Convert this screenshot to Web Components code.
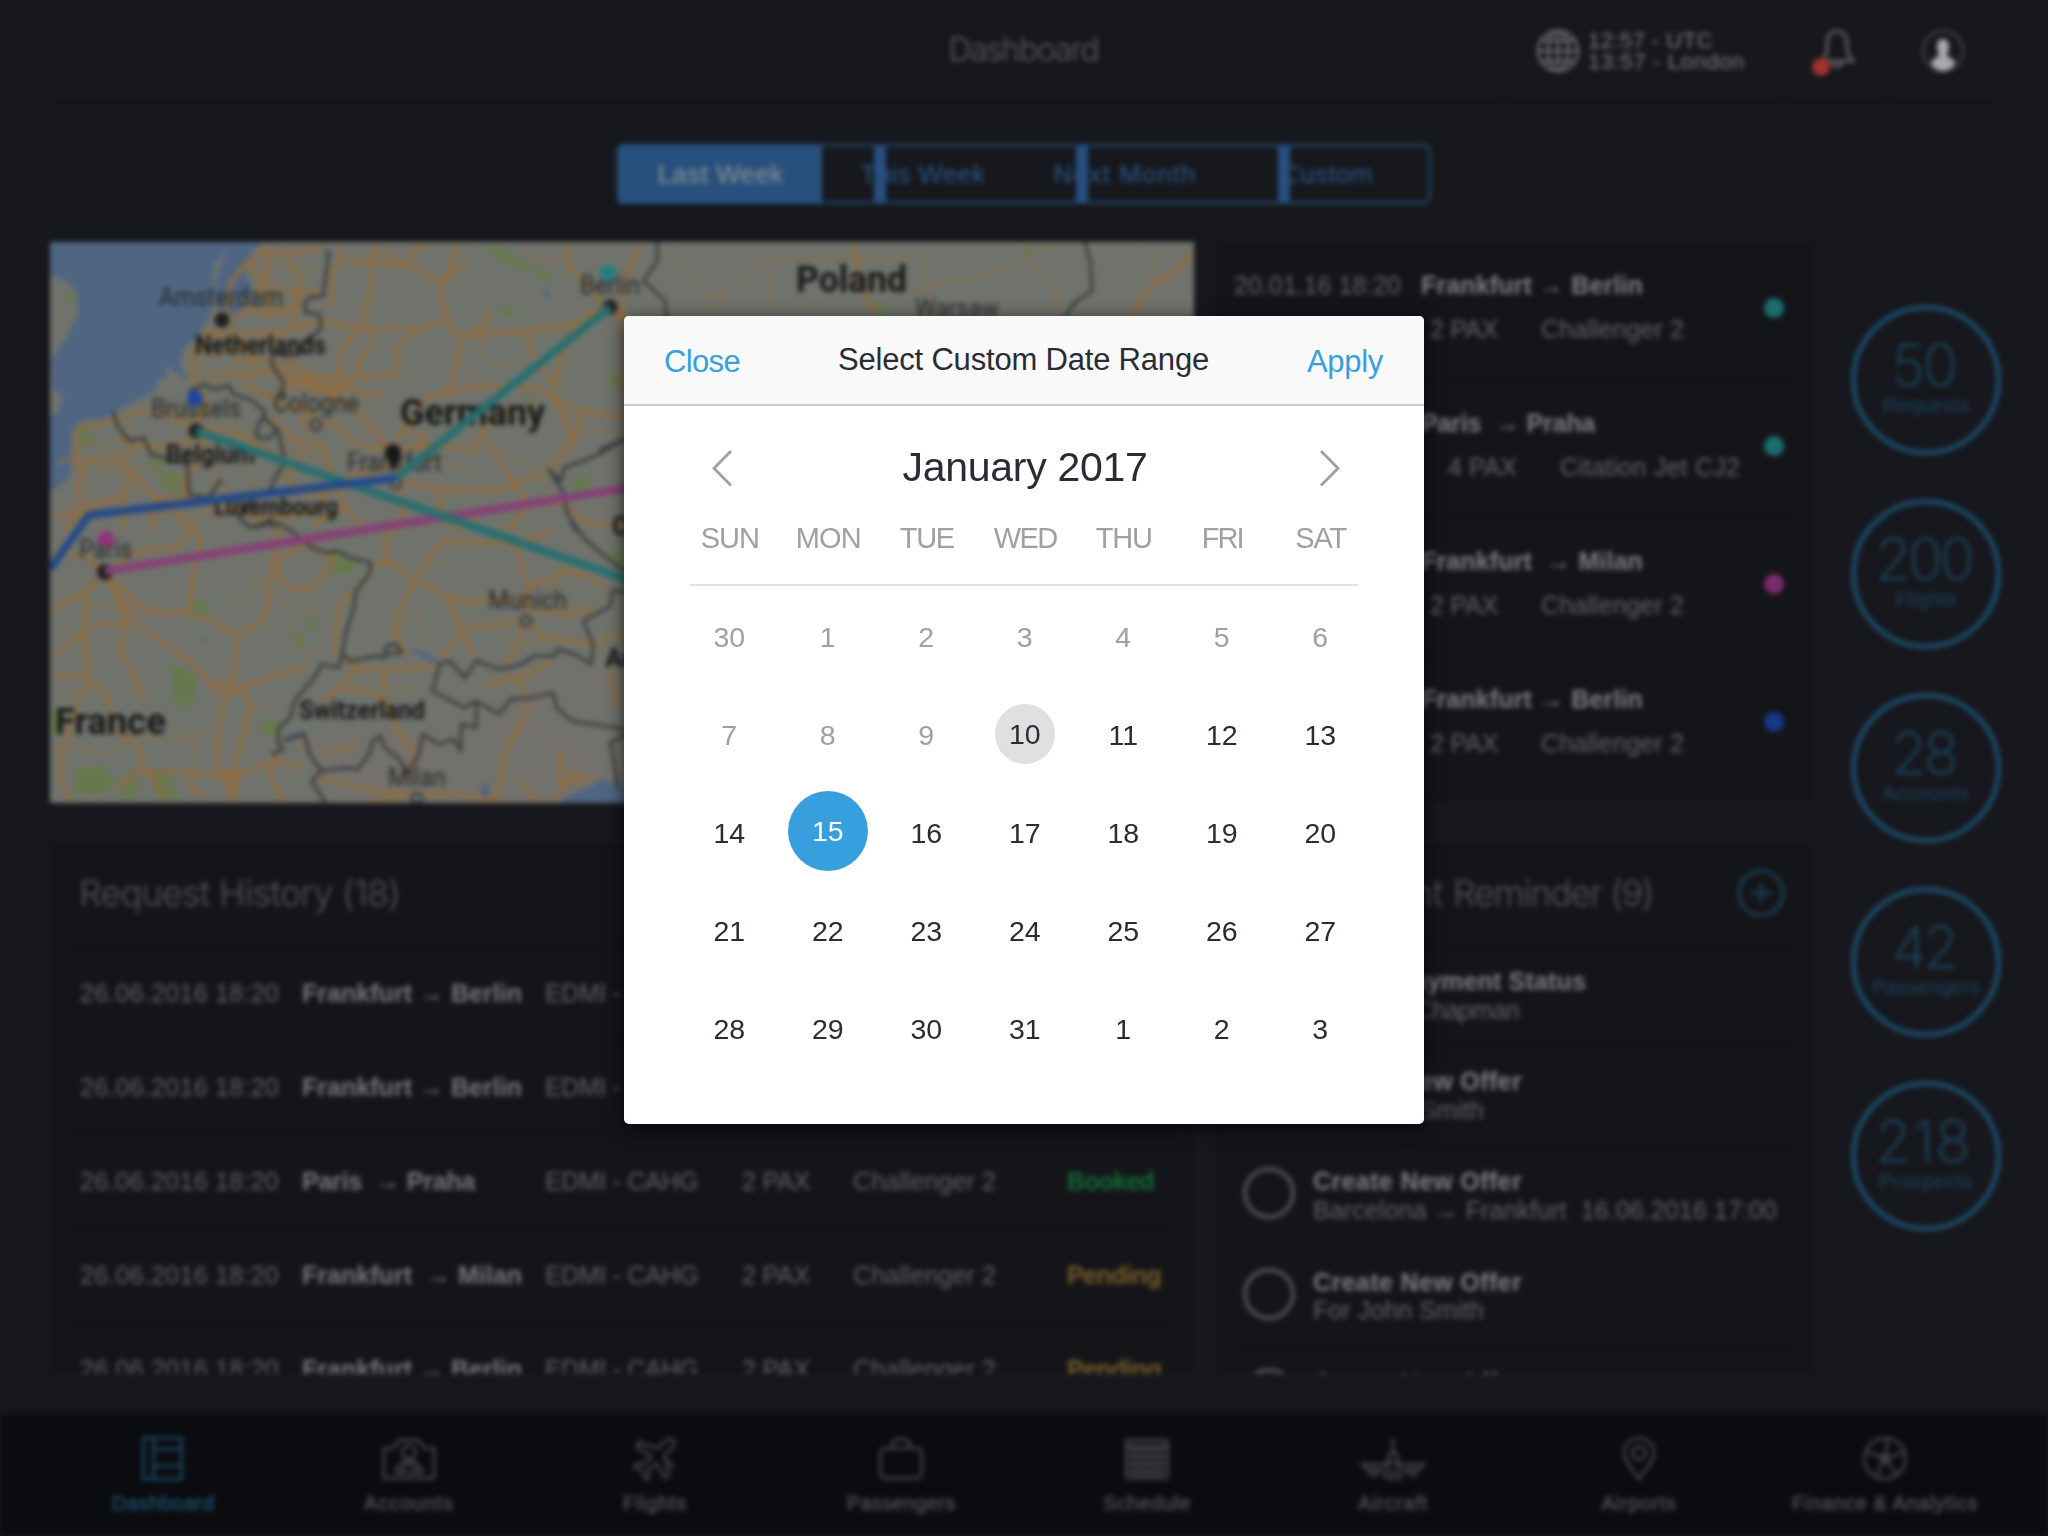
<!DOCTYPE html>
<html lang="en">
<head>
<meta charset="utf-8">
<title>Dashboard</title>
<style>
html,body{margin:0;height:100%;background:#17181d;overflow:hidden}
body{width:2048px;height:1536px;position:relative;font-family:"Liberation Sans",Arial,sans-serif}
</style>
</head>
<body>
<dash-app></dash-app>
<date-dialog></date-dialog>
<script>
function define(name, build) {
  customElements.define(name, class extends HTMLElement {
    connectedCallback() {
      if (this.shadowRoot) return;
      this.attachShadow({ mode: 'open' }).innerHTML = build(this);
    }
  });
}

/* Text run tracked out or in so it occupies the width given in "w". */
customElements.define('fit-text', class extends HTMLElement {
  connectedCallback() {
    if (this.shadowRoot) return;
    this.attachShadow({ mode: 'open' }).innerHTML =
      '<style>:host{display:inline-block;white-space:pre;line-height:1.15}span{display:inline-block}</style><span><slot></slot></span>';
    const s = this.shadowRoot.querySelector('span');
    const w = +this.getAttribute('w'), n = this.textContent.length;
    const natural = s.getBoundingClientRect().width;
    s.style.letterSpacing = ((w - natural) / n).toFixed(3) + 'px';
    this.style.width = w + 'px';
  }
});

/* ---------- header ---------- */
define('dash-header', () => `
<style>
:host{display:grid;grid-template-columns:1454px 276px 109px 106px;margin:0 50px;height:101px;border-bottom:2px solid #101115}
div{display:flex;align-items:center;border-left:2px solid #131418;box-sizing:border-box}
.title{border:0;justify-content:center;padding-left:493px;color:#5c5d5f;font:300 32px Inter,"Liberation Sans",sans-serif}
.clock{padding-left:30px;gap:8px;color:#7c7d7f;font-size:22px}
.clock p{margin:0;line-height:21px;display:flex;flex-direction:column}
.clock fit-text{line-height:21px}
.ico{justify-content:center}
svg{display:block;fill:none}
</style>
<div class="title"><fit-text w="150">Dashboard</fit-text></div>
<div class="clock">
 <svg width="44" height="44" viewBox="0 0 44 44" stroke="#707173" stroke-width="2.4"><circle cx="22" cy="22" r="20"/><ellipse cx="22" cy="22" rx="10" ry="20"/><path d="M22 2v40M2 22h40M5 12h34M5 32h34"/></svg>
 <p><fit-text w="125">12:57 - UTC</fit-text><fit-text w="157">13:57 - London</fit-text></p>
</div>
<div class="ico"><svg width="54" height="54" viewBox="0 0 54 54"><path d="M13 37c5-5 5-9 5-17 0-8 4-13 10-13s10 5 10 13c0 8 1 12 6 17zM23 38c0 6 10 6 10 0M13 37h31" stroke="#6a6b6d" stroke-width="2.6"/><circle cx="12" cy="43" r="9" fill="#a23231"/></svg></div>
<div class="ico"><svg width="46" height="46" viewBox="0 0 46 46"><circle cx="23" cy="23" r="20" stroke="#4c4d50" stroke-width="2"/><path d="M23 11c5 0 6 4 6 8 0 4-2 6-2 8 0 3 8 3 8 8-2 5-7 8-12 8s-10-3-12-8c0-5 8-5 8-8-1-2-2-4-2-8 0-4 1-8 6-8z" fill="#a8a9aa"/></svg></div>`);

/* ---------- period switch ---------- */
define('period-switch', () => `
<style>
:host{display:grid;grid-template-columns:repeat(4,1fr);width:814px;height:60px;border:3px solid #1f3f61;border-radius:7px;box-sizing:border-box;color:#285887;font-size:26px}
div{position:relative;display:flex;align-items:center;justify-content:center}
.on{background:#28507d;color:#8c9094;margin:-3px 0 -3px -3px;border-radius:6px 0 0 6px}
div:not(.on)::after{content:"";position:absolute;left:52px;top:-1px;bottom:-1px;width:12px;background:#285080}
fit-text{margin-top:1px}
.on fit-text{margin-left:2px}
</style>
<div class="on"><fit-text w="126">Last Week</fit-text></div>
<div><fit-text w="125">This Week</fit-text></div>
<div><fit-text w="143">Next Month</fit-text></div>
<div><fit-text w="92">Custom</fit-text></div>`);

/* ---------- route map ---------- */
define('route-map', () => {
  const label = (x, y, w, size, t, bold) =>
    `<text x="${x}" y="${y}" textLength="${w}" lengthAdjust="spacingAndGlyphs" font-size="${size}" ${bold ? 'font-weight="700" fill="#161718"' : 'fill="#27292b"'}>${t}</text>`;
  return `
<style>
:host{display:block;width:1144px;height:561px;overflow:hidden}
svg{display:block;font-family:Roboto,"Liberation Sans",sans-serif}
path{vector-effect:non-scaling-stroke}
.sea{fill:#4f6582}.park{fill:#66794e}.land{fill:#70736c}
.road path{fill:none;stroke:#8c6d45;stroke-width:4.4;stroke-linejoin:round}
.minor path{fill:none;stroke:#7f7054;stroke-width:2.8}
.border path{fill:none;stroke:#3a3c3c;stroke-width:3;stroke-linejoin:round}
.hills{fill:#73716b}
.route path{fill:none;stroke-width:8;stroke-linejoin:round}
</style>
<svg width="1144" height="561" viewBox="50 241 1144 561">
<rect class="land" x="50" y="241" width="1144" height="561"/>
<g transform="translate(40 520) scale(.3827 .3333)">
 <path class="hills" d="M690 660L880 620 1000 640 1150 560 1350 530 1530 640V850H760z M1240 470l150-70 110 60 30 120-170-20z"/>
</g>
<g transform="translate(40 230) scale(.3827 .3333)">
 <path class="sea" d="M20 30H580L545 75 535 125 560 180 530 230 490 265 470 240 450 180 470 110 490 50 455 100 445 190 445 250 420 310 375 350 365 400 385 440 310 440 300 480 230 520 170 560 105 572 82 600 80 730 45 770 20 785V555L55 520 60 490 35 480 30 385 70 320 100 240 95 180 60 145 20 135z"/>
 <path class="land" d="M330 405l55 45-10 22-40-14zM20 490h40l-10 50-30 20z"/>
 <path class="park" d="M90 590l40 10 20 40-50 5zM315 720l70 15-5 50-60-10zM285 680l40 10-5 20-35-8zM1160 42l50 10 30 30 50 20-10 20-50-20-50-30zM1300 110l30 15-5 25-25-8zM1205 220l35 20-10 20-30-15zM1480 430l45 10v30l-35-8zM1395 745l45-10-5 40-45 10zM1255 480l40 20-10 20zM60 200l35-15v35z"/>
 <path class="sea" d="M735 42l20 10 2 25-12 5zM1318 180l8-10 4 35-8 5z"/>
 <g class="minor">
  <path d="M40 700l60-25 90 50 80-20 110 60M90 620l100 40 60 80M200 560l80 90 100 20M300 520l70 40 130-10M430 320l60 40 70-20 80 60M400 430l90 20 100-40 60 30M410 400l80 80 90-10M560 300l70 40 60 10M640 260l60 50M500 200l90 40 100-20M560 120l80 50 50 10M600 70l60 60 60-10M420 620l60 60-10 80 60 50M500 580l90 70 60 60M640 640l80 40 100-10M660 600l-20 80 40 60M740 500l100 40 60 60M860 480l60 50M1150 300l0 70 40 30 80-10M1090 390l60 50M1380 540l30 60 100 0M1260 50l60 50 60-30M850 60l80 40M1430 600l-90 60M1200 650l90 70 60 80M980 640l60 60 100 20"/>
  <path d="M50 830l120-30 130 60 200-20 150 60M120 740l20 150M200 700l60 100M460 720l-30 100 60 70M540 700l30 100"/>
 </g>
 <g class="road">
  <path d="M480 265L500 150 540 95 590 60 640 70 700 55 750 60M590 60L600 130 560 180 640 190 735 180M480 265L540 240 600 250 680 230M480 265L440 330 400 360 400 440 430 500 410 590M480 270L530 330 560 400 540 460 600 500 680 460M400 360L470 370 530 350 600 330 640 300 740 270M420 300L500 320 560 300 640 310M500 390l60-10 60 20 40 60M450 420l80 10 70-10 60 30M640 60l40 90-10 70 0 80M540 95l50 60 10 80"/>
  <path d="M780 40L790 80 860 100 870 170 850 230 835 290 740 270M790 80L760 130 765 230M860 100L935 95 1000 120 1050 160 1080 90 1095 40M860 100L880 60 870 40M935 95L900 60M935 110L990 50 1010 40M1050 160L1055 220 1075 290 1100 320 1170 280 1175 240M1050 160L1070 130 1120 100M835 290L860 290 875 330M835 290L990 295 1060 265M835 290L780 370 790 420 740 450M990 295L930 350 935 430 840 440M1100 320L1090 380 1075 470 1040 490 1010 500 950 590 920 660M1270 300L1200 305 1100 320M1270 300L1400 280 1480 230M1400 280L1370 340 1350 440 1340 500M1270 300L1290 380 1350 470M1380 40L1385 110 1430 160 1480 230 1530 250M1480 230L1420 250M1040 490L1140 465 1220 470 1300 470 1340 500 1420 540 1530 560"/>
  <path d="M680 460L700 430 760 440 840 440 830 400 870 340M680 460L760 480 800 470 840 490 890 490M700 480l60-10 60-20M680 440l60 30 60-10M690 450l80 20-30 60M650 420l50 40 90 10M700 420l30 60 60 20M640 380l70 60M600 500L650 540 680 520 730 570 770 580 830 640 920 660M740 450L820 540 920 660M600 560L660 620 740 650 770 760 800 830 850 900M680 520L700 610M920 660L990 640 1010 620 950 590M920 660L1040 640 1130 660 1150 600 1220 540 1300 520M1150 600L1240 760 1280 820 1220 900M940 740L930 690 880 720 810 730 770 760M940 750L1040 770 1140 780 1250 770M940 740L950 850 920 900M1040 770L1050 860 1110 900M1240 760L1330 720 1390 640 1420 540M1340 500L1370 560 1390 640"/>
  <path d="M410 590L350 560 270 540 190 570 100 590M410 590L380 640 250 650 200 620M410 590L430 680 380 730 380 800 300 800M410 590L530 610 570 650 640 680M410 590L440 510M250 650L190 700 130 680 100 760 110 850M100 590L90 680 110 740M40 860L120 840 220 790 240 720 190 670M240 720L300 800 360 850 390 900M110 850L60 900M220 790L215 900M300 800L290 900M380 800L500 830 550 850 640 860 720 840 770 760M560 850L600 890M680 460L610 410M690 650L640 740 690 790 760 780"/>
  <path d="M1280 820L1370 820 1420 870 1530 890M1100 900l50-60 130-20M800 830l-90 50"/>
 </g>
 <g class="border">
  <path d="M755 60L750 110 740 195 705 200 690 220 695 245 730 250 735 290 710 320 690 330 680 370 640 375 610 365 605 400 635 450 630 510"/>
  <path d="M390 480L430 460 450 475 495 465 505 490 550 505 590 545 570 580 565 620 600 620 620 600 585 560M620 590L640 690 610 750 600 790 560 800 520 860 550 890 600 870M190 540L205 590 235 630 270 620 290 670 350 690 385 700 390 790 440 800 475 745"/>
  <path d="M1530 625L1470 650 1460 670 1420 690 1370 710 1360 750 1330 715 1370 790 1375 840 1400 900M600 860L620 900"/>
 </g>
</g>
<g transform="translate(40 520) scale(.3827 .3333)">
 <path class="park" d="M340 430l70 30-5 70-25 45-30-40zM400 240l40 5v40l-40-5zM755 90l80 30-20 30-50 10zM660 340l30-5 0 40-30-10zM700 300l20-5v30l-20 5zM90 745l70-10 40 50-40 40-70-10zM230 750l30 10-10 70-40 0zM295 760l20-30 50 100-60 10zM585 600l40-5-10 50-40-10zM1480 90l45 0v50zM25 560l20 20v60H25z"/>
 <path class="sea" d="M1370 830L1440 795 1470 775 1530 800V850H1360zM640 645l50-15 10 10-50 20zM960 385l40 5 45 35-10 10-50-35zM1150 800l20-20 5 50-20 0zM430 340l8 25-8 5z"/>
 <g class="minor">
  <path d="M40 320l70 30M120 260l90-20 60 30M30 690l60-10 90 20 70-60 120 30 80-60M60 550l40-60M560 190l60 40 60 60 50-30M640 320l40 60 60 20M930 330l50-60 30 60M500 260l80-90M330 620l90 60-30 80M540 560l60 0M1000 90l70 60M1390 100l-60 120 60 40 90-40M1180 320l60 60 90-20M1350 700l30 60M890 460l30 50 70-20M1160 490l80-40"/>
 </g>
 <g class="road">
  <path d="M170 155L120 110 30 90M170 160L230 100 360 75 410 0M170 160L130 200 30 270M170 160L120 210 115 340 130 480 100 540 60 680 50 770 80 840M170 160L240 230 290 275 380 275 450 300 515 345 590 290 600 190 625 0M170 160L200 230 230 310 120 310M190 200L255 310 400 430 440 480 520 500 600 470 700 435M230 310L210 380 240 450 270 540M115 340L30 410M130 480L180 530 190 620 260 680 270 740 200 800M30 465L130 460M515 345L510 450 490 500 470 600 460 760M520 500L555 550 530 640 500 770M440 480L480 520 540 500M270 755L400 755 480 770 620 720 690 740M480 770L510 840M400 755L390 800 430 830M270 740L330 830M450 760l60 20-20 60M460 760l60-10-10 70"/>
  <path d="M405 120L390 270M405 120L420 60 390 0M620 120L630 190 700 210 770 120 700 60 620 120M870 130L910 120 980 175 1060 225 1100 240 1250 240M870 130L850 180 780 260 770 400M910 120L900 60 950 0M980 175L1050 60 1230 70 1340 30M980 175L920 320 960 400M1060 225L1100 310 1090 350 1050 410M1100 320L1200 310 1270 300 1280 200 1370 150 1440 170 1480 200M1250 240L1280 200M1240 60L1275 190M1270 300L1240 400 1210 420M1270 300L1320 350 1450 370 1530 330M1100 320L1130 400M1270 260L1380 280 1450 270M780 410L840 440 900 450 1000 440 1040 430M830 440L780 500 740 540M900 450L900 540 940 640 980 690 960 780M780 500L860 510 920 560M1250 470L1280 560 1220 680 1200 790 1180 840M1160 490L1250 470 1340 420M740 700L830 670M700 700L690 660M620 700L600 770 640 850M720 770L830 800 960 820 1080 820 1200 840M960 820L860 850M1340 840L1400 750 1420 780M1260 780L1300 840M1480 430L1520 560M1360 690L1360 780 1450 770"/>
 </g>
 <g class="border">
  <path d="M530 0L550 20 620 5 670 40 710 80 750 95 780 90 810 110 865 125 860 160 825 210 820 260 800 330 790 400 810 420 880 405 900 410 905 375 930 370 945 395 900 400M790 400L780 440 735 430 720 465 665 540 655 590 625 620 620 660 635 685 605 700M635 660L690 640 705 700 735 750 710 780 745 845M735 750L800 740 830 745 860 700 870 660 890 645 900 680 940 715 960 760 990 700 1000 640 1040 670 1080 655 1100 690 1100 610 1140 620 1140 540 1200 580 1230 535 1290 530 1340 515 1350 560 1390 600 1530 625"/>
  <path d="M1040 430L1070 420 1110 470 1140 420 1200 445 1260 430 1290 405 1345 405 1350 385 1400 400 1440 430 1445 370 1420 300 1490 255 1495 210 1530 210M1045 430L1025 510 1110 560 1140 540M1390 0L1420 50 1480 110 1530 150M1530 640L1490 665 1500 720 1510 800"/>
 </g>
</g>
<g transform="translate(600 230) scale(.3954 .3333)">
 <g class="minor"><path d="M160 50L260 190 300 200 420 90 640 85 820 80M420 90L435 220 400 270M820 80L830 160 820 260M830 160L960 140 1080 80 1150 40M1080 80L1120 150 1160 190 1150 260M1390 40L1410 130 1440 170M640 160L820 180M480 270l40-50M250 270l60-70"/></g>
 <g class="road"><path d="M100 40L75 110 55 200 60 270M640 40L660 170 700 260M1340 260L1400 160 1440 130 1500 70M40 230L62 300 62 560"/></g>
 <path class="park" d="M1070 42l20 0 5 20-20 10zM690 215l45 5-30 25zM20 430l30 5v35l-25-5zM130 150l15 20-10 15z"/>
 <g class="border"><path d="M145 30L145 90 110 150 165 210 170 270M1225 30L1240 90 1245 180 1200 215 1175 260M0 670L60 625"/></g>
</g>
${label(159,305,124,25,'Amsterdam')}${label(195,353,131,25,'Netherlands',1)}${label(151,416,90,25,'Brussels')}
${label(273,411,86,25,'Cologne')}${label(400,424,145,37,'Germany',1)}${label(166,462,89,25,'Belgium',1)}
${label(347,470,95,25,'Frankfurt')}${label(214,514,124,24,'Luxembourg',1)}${label(580,293,60,25,'Berlin')}
${label(79,557,53,25,'Paris')}${label(488,608,79,25,'Munich')}${label(299,718,126,25,'Switzerland',1)}
${label(55,733,111,37,'France',1)}${label(388,785,58,25,'Milan')}${label(796,291,111,37,'Poland',1)}${label(915,316,84,25,'Warsaw')}
${label(612,534,90,25,'Czechia',1)}${label(605,666,85,25,'Austria',1)}
<g fill="#1e1f20"><circle cx="222" cy="319" r="7.5"/><circle cx="196" cy="430" r="7.5"/><circle cx="610" cy="306" r="7.5"/><circle cx="105" cy="571" r="8"/><circle cx="393" cy="453" r="8"/></g>
<g fill="#777973" stroke="#3a3c3c" stroke-width="3"><circle cx="316" cy="424" r="5"/><circle cx="526" cy="620" r="5"/><circle cx="396" cy="482" r="5"/><circle cx="417" cy="797" r="5"/></g>
<g class="route">
 <path stroke="#864076" d="M105 570L640 485"/>
 <path stroke="#276f6f" d="M196 430L640 583M396 477L610 306"/>
 <path stroke="#254a88" d="M50 568L89 514 396 477"/>
</g>
<circle cx="608" cy="272" r="8" fill="#1f7f84"/><circle cx="195" cy="397" r="8" fill="#1d45a0"/><circle cx="106" cy="538" r="8" fill="#92327d"/>
<path d="M386 455a8 8 0 1 1 14 0l-7 14z" fill="#161718"/>
</svg>`;
});

/* ---------- upcoming flights ---------- */
define('flight-row', el => {
  const a = n => el.getAttribute(n);
  const meta = a('wide')
    ? ['214px 112px 1fr', 69, 180] : ['196px 111px 1fr', 68, 143];
  return `
<style>
:host{display:flex;flex-direction:column;justify-content:center;gap:15px;height:130px;padding-bottom:6px;border-bottom:2px solid #111216;font-size:25px;color:#626366;position:relative}
:host([last]){border-color:transparent}
b{color:#7e7f81}
.a,.b{display:grid;grid-template-columns:187px 1fr}
.b{grid-template-columns:${meta[0]}}
i{position:absolute;right:9px;top:56px;width:20px;height:20px;border-radius:50%;background:${a('dot')}}
</style>
<div class="a">${a('date') ? `<fit-text w="167">${a('date')}</fit-text>` : '<span></span>'}<b><fit-text w="${a('w')}">${a('route')}</fit-text></b></div>
<div class="b"><span></span><fit-text w="${meta[1]}">${a('pax')}</fit-text><fit-text w="${meta[2]}">${a('craft')}</fit-text></div>
<i></i>`;
});
define('flight-panel', () => `
<style>:host{display:block;width:597px;height:560px;background:#141519;box-sizing:border-box;padding:0 19px}</style>
<flight-row date="20.01.16 18:20" route="Frankfurt → Berlin" w="222" pax="2 PAX" craft="Challenger 2" dot="#1c6e6e"></flight-row>
<flight-row route="Paris  → Praha" w="174" pax="4 PAX" craft="Citation Jet CJ2" wide="1" dot="#1c6e6e"></flight-row>
<flight-row route="Frankfurt  → Milan" w="222" pax="2 PAX" craft="Challenger 2" dot="#7a2c6c"></flight-row>
<flight-row last route="Frankfurt → Berlin" w="222" pax="2 PAX" craft="Challenger 2" dot="#133a88"></flight-row>`);

/* ---------- request history ---------- */
define('history-row', el => {
  const a = n => el.getAttribute(n);
  return `
<style>
:host{display:grid;grid-template-columns:222px 243px 197px 111px 214px 1fr;align-items:center;height:92px;border-bottom:2px solid #111216;padding-left:10px;font-size:25px;color:#606164}
b{color:#77787b}
.s{color:${a('status') === 'Booked' ? '#126b33' : '#755c27'}}
</style>
<fit-text w="199">26.06.2016 18:20</fit-text><b><fit-text w="${a('w')}">${a('route')}</fit-text></b>
<fit-text w="153">EDMI - CAHG</fit-text>${a('status') ? `<fit-text w="68">2 PAX</fit-text><fit-text w="143">Challenger 2</fit-text>
<b><fit-text class="s" w="${a('status') === 'Booked' ? 87 : 94}">${a('status')}</fit-text></b>` : ''}`;
});
define('history-panel', () => `
<style>
:host{display:block;width:1144px;height:531px;overflow:hidden;background:#141519;box-sizing:border-box;padding:0 20px}
h2{margin:0;height:102px;display:flex;align-items:center;border-bottom:2px solid #111216;padding-left:9px;color:#545557;font:300 36px Inter,"Liberation Sans",sans-serif}
</style>
<h2><fit-text w="321">Request History (18)</fit-text></h2>
<history-row route="Frankfurt → Berlin" w="220"></history-row>
<history-row route="Frankfurt → Berlin" w="220"></history-row>
<history-row route="Paris  → Praha" w="173" status="Booked"></history-row>
<history-row route="Frankfurt  → Milan" w="220" status="Pending"></history-row>
<history-row route="Frankfurt → Berlin" w="220" status="Pending"></history-row>`);

/* ---------- reminders ---------- */
define('reminder-row', () => `
<style>
:host{display:flex;align-items:center;gap:18px;height:98.2px;border-bottom:2px solid #111216;padding-left:9px;font-size:25px;color:#626365}
i{width:52px;height:52px;box-sizing:border-box;border:4px solid #505153;border-radius:50%;margin-bottom:6px}
p{margin:0;display:flex;flex-direction:column;gap:0;height:58px}
::slotted(*){line-height:28px!important;display:block}
::slotted(b){color:#7e7f81}
</style><i></i><p><slot></slot></p>`);
define('reminder-panel', () => `
<style>
:host{display:block;width:597px;height:531px;overflow:hidden;background:#141519;box-sizing:border-box;padding:0 19px}
h2{margin:0;height:102px;display:flex;align-items:center;justify-content:space-between;border-bottom:2px solid #111216;color:#545557;font:300 36px Inter,"Liberation Sans",sans-serif;padding-right:8px}
h2 div{display:flex;justify-content:space-between;width:419px}
svg{margin-top:-3px}
</style>
<h2><div><fit-text w="209">Appointment</fit-text><fit-text w="200">Reminder (9)</fit-text></div>
<svg width="48" height="48" viewBox="0 0 48 48" fill="none" stroke="#1a4059" stroke-width="3.2"><circle cx="24" cy="24" r="22"/><path d="M24 14v20M14 24h20"/></svg></h2>
<reminder-row><b><fit-text w="273">Check Payment Status</fit-text></b><fit-text w="206">For Mark Chapman</fit-text></reminder-row>
<reminder-row><b><fit-text w="209">Create New Offer</fit-text></b><fit-text w="171">For John Smith</fit-text></reminder-row>
<reminder-row><b><fit-text w="209">Create New Offer</fit-text></b><fit-text w="464">Barcelona → Frankfurt  16.06.2016 17:00</fit-text></reminder-row>
<reminder-row><b><fit-text w="209">Create New Offer</fit-text></b><fit-text w="171">For John Smith</fit-text></reminder-row>
<reminder-row><b><fit-text w="209">Create New Offer</fit-text></b></reminder-row>`);

/* ---------- counters ---------- */
define('stat-ring', el => `
<style>
:host{display:flex;flex-direction:column;align-items:center;width:150px;height:150px;box-sizing:border-box;border:5px solid #1b4b69;border-radius:50%;color:#1c4a68}
.n{font:200 58px/58px Inter,"Liberation Sans",sans-serif;margin:26px 5px 0 0}
.n fit-text{line-height:58px}
.l{font-size:20px;line-height:22px;margin-top:0;color:#1a455f}
.l fit-text{line-height:22px}
</style>
<div class="n"><fit-text w="${el.getAttribute('nw')}">${el.getAttribute('n')}</fit-text></div>
<div class="l"><fit-text w="${el.getAttribute('lw')}">${el.getAttribute('l')}</fit-text></div>`);

/* ---------- bottom navigation ---------- */
const ICONS = {
  dash: '<rect x="9" y="2" width="41" height="44"/><path d="M20 2v44M20 14h30M20 32h30"/>',
  acc: '<path d="M3 13h10l7-9h20l7 9h10v32H3z"/><circle cx="30" cy="17" r="7"/><path d="M26 24c0 5-10 6-10 15h28c0-9-10-10-10-15M20 39l10-12 10 12"/>',
  fly: '<path d="M49 4c3 2 2 6-2 10l-7 7 5 20-4 4-10-16-8 7 1 8-4 3-4-10-8-4 3-4 8 1 7-8L10 12l4-4 19 5 7-7c4-4 7-4 9-2z"/><path d="M12 5l8 5M50 34l-6-8"/>',
  bag: '<rect x="8" y="13" width="44" height="32" rx="5"/><path d="M20 13c0-7 3-10 10-10s10 3 10 10"/>',
  cal: '<rect x="8" y="4" width="44" height="41" rx="2"/><path d="M8 10h44M8 14h44M8 22h44M8 30h44M8 38h44M16 14v31M23 14v31M30 14v31M37 14v31M44 14v31"/>',
  air: '<path d="M30 2v18M26 21c0-4 8-4 8 0l3 9h26l-5 6H42l-5 9H23l-5-9H2l-5-6h26z"/><circle cx="30" cy="34" r="6"/><circle cx="9" cy="39" r="4"/><circle cx="51" cy="39" r="4"/>',
  pin: '<path d="M30 46C24 36 14 28 14 18a16 16 0 0 1 32 0c0 10-10 18-16 28z"/><circle cx="30" cy="18" r="7"/>',
  fin: '<circle cx="30" cy="24" r="22"/><path d="M30 24L33 2M30 24l21-7M30 24l13 18M30 24l-10 20M30 24L10 16"/><circle cx="30" cy="24" r="4"/>'
};
define('nav-item', el => `
<style>
:host{display:flex;flex-direction:column;align-items:center;color:#555658;font-size:20px}
:host([on]){color:#1d5474}
svg{display:block;margin:22px 0 2px;overflow:visible;fill:none;stroke:#444547;stroke-width:2.8}
:host([on]) svg{stroke:#1c4a66}
div{margin-top:8px;line-height:24px;-webkit-text-stroke:.4px currentColor}
</style>
<svg width="56" height="45" viewBox="0 0 60 48">${ICONS[el.getAttribute('icon')]}</svg>
<div><fit-text w="${el.getAttribute('w')}">${el.getAttribute('t')}</fit-text></div>`);

define('dash-app', () => `
<style>
:host{display:flex;flex-direction:column;width:2048px;height:1536px;filter:blur(2.5px)}
.switch{display:flex;justify-content:center;padding:41px 0 38px}
main{display:flex;gap:29px;padding-left:50px;height:1172px;box-sizing:border-box}
.grid{display:grid;grid-template-columns:1144px 597px;gap:40px 21px;align-content:start;width:1763px}
aside{display:flex;flex-direction:column;gap:44px;padding-top:63px;margin-left:9px}
nav{display:grid;grid-template-columns:repeat(8,246px);padding-left:40px;background:#0b0c10;height:122px}
</style>
<dash-header></dash-header>
<div class="switch"><period-switch></period-switch></div>
<main>
 <div class="grid"><route-map></route-map><flight-panel></flight-panel><history-panel></history-panel><reminder-panel></reminder-panel></div>
 <aside>
  <stat-ring n="50" nw="64" l="Requests" lw="87"></stat-ring>
  <stat-ring n="200" nw="96" l="Flights" lw="61"></stat-ring>
  <stat-ring n="28" nw="64" l="Accounts" lw="87"></stat-ring>
  <stat-ring n="42" nw="64" l="Passengers" lw="108"></stat-ring>
  <stat-ring n="218" nw="96" l="Prospects" lw="94"></stat-ring>
 </aside>
</main>
<nav>
 <nav-item on icon="dash" t="Dashboard" w="102"></nav-item>
 <nav-item icon="acc" t="Accounts" w="90"></nav-item>
 <nav-item icon="fly" t="Flights" w="64"></nav-item>
 <nav-item icon="bag" t="Passengers" w="109"></nav-item>
 <nav-item icon="cal" t="Schedule" w="88"></nav-item>
 <nav-item icon="air" t="Aircraft" w="70"></nav-item>
 <nav-item icon="pin" t="Airports" w="75"></nav-item>
 <nav-item icon="fin" t="Finance &amp; Analytics" w="186"></nav-item>
</nav>`);

/* ---------- date dialog ---------- */
define('month-grid', () => {
  const days = [30, ...Array.from({ length: 31 }, (_, i) => i + 1), 1, 2, 3];
  const names = [['SUN', 58], ['MON', 65], ['TUE', 54], ['WED', 63], ['THU', 56], ['FRI', 41], ['SAT', 51]];
  return `
<style>
:host{display:block;padding:0 55.5px}
.w,.d{display:grid;grid-template-columns:repeat(7,98.5px)}
.w span{text-align:center;font-size:29px;line-height:34px;color:#a0a0a0;padding-left:2px}
hr{border:0;height:2px;background:#e0e0e0;margin:29px 10.5px 0}
.d{grid-auto-rows:98px;padding-top:2px}
.d span{display:flex;align-items:center;justify-content:center;font-size:28.5px;line-height:32px;color:#292c35;padding-left:1px}
.d .off{color:#a0a0a0}
em{font-style:normal;display:flex;align-items:center;justify-content:center;width:60px;height:60px;border-radius:50%;background:#e0e0e0;margin-top:-2px}
em.sel{width:80px;height:80px;background:#389fdf;color:#fff;margin-top:-4px}
</style>
<div class="w">${names.map(([n, w]) => `<span><fit-text w="${w}">${n}</fit-text></span>`).join('')}</div>
<hr>
<div class="d">${days.map((d, i) => i === 10 ? `<span><em>${d}</em></span>` : i === 15 ? `<span><em class="sel">${d}</em></span>` : `<span${i < 10 ? ' class="off"' : ''}>${d}</span>`).join('')}</div>`;
});
define('date-dialog', () => `
<style>
:host{position:absolute;left:624px;top:316px;width:800px;height:808px;background:#fff;border-radius:5px;box-shadow:0 4px 18px rgba(0,0,0,.75);overflow:hidden;display:block;color:#292c35}
header{height:88px;background:#f9f9f9;border-bottom:2px solid #c8c8c8;display:flex;justify-content:space-between;align-items:center;padding:0 41px 0 40px;font-size:31px}
header fit-text:not(.t){color:#389fdf;margin-top:3px}
.m{display:flex;justify-content:space-between;align-items:center;padding:0 83px 0 87px;height:46px;margin-top:39px;font-size:41px}
.m fit-text{margin-right:2px}
.m svg{fill:none;stroke:#a0a0a0;stroke-width:2.8}
month-grid{margin-top:30px}
</style>
<header><fit-text w="76">Close</fit-text><fit-text class="t" w="371">Select Custom Date Range</fit-text><fit-text w="76">Apply</fit-text></header>
<div class="m"><svg width="22" height="38" viewBox="0 0 22 38"><path d="M20 2L3 19.300 20 36.500"/></svg><fit-text w="245">January 2017</fit-text><svg width="22" height="38" viewBox="0 0 22 38"><path d="M2 2L19 19.300 2 36.500"/></svg></div>
<month-grid></month-grid>`);
</script>
</body>
</html>
